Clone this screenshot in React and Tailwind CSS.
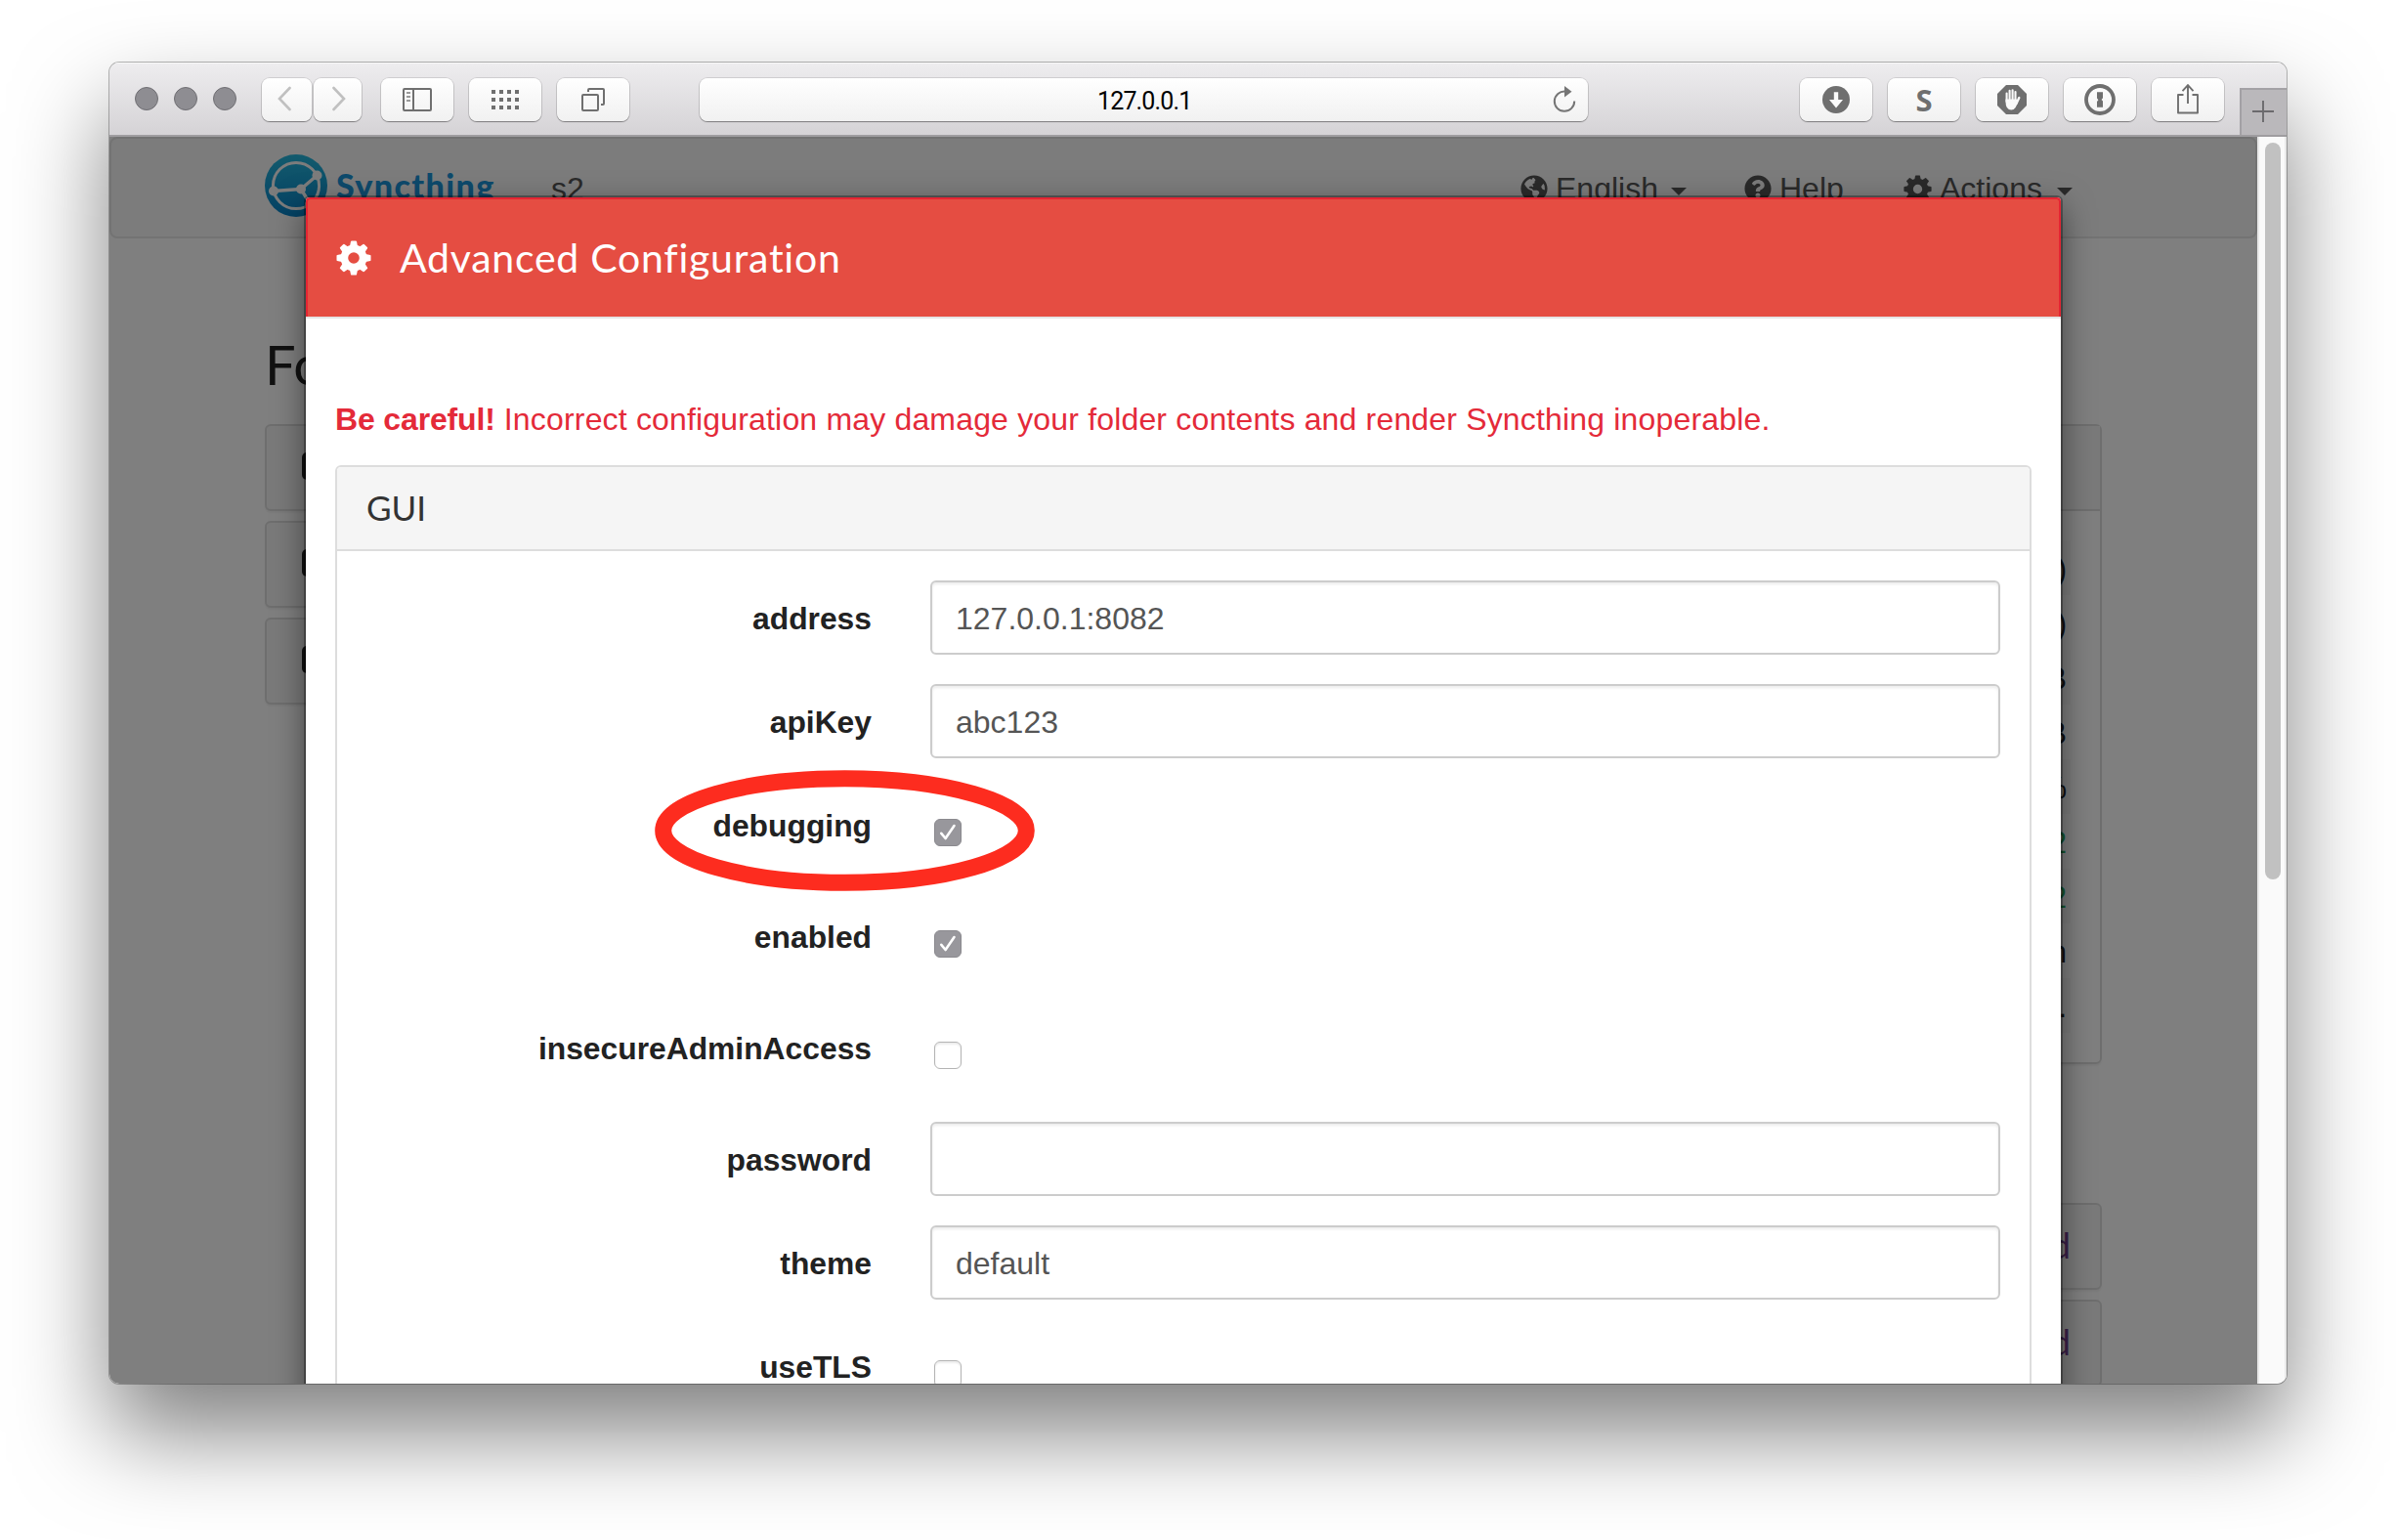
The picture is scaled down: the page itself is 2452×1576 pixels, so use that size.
import React from "react";
import { FaQuestionCircle, FaGlobeAmericas } from "react-icons/fa";

const TOOTH = "M-4.2,-11 L-3,-17 Q-2.8,-17.5 -2,-17.5 L2,-17.5 Q2.8,-17.5 3,-17 L4.2,-11 Z";

function Cog({ className }) {
  return (
    <svg viewBox="-18 -18 36 36" className={className} fill="currentColor">
      <circle r="9.6" fill="none" stroke="currentColor" strokeWidth="7.6" />
      {[0, 45, 90, 135, 180, 225, 270, 315].map((a) => (
        <path key={a} d={TOOTH} transform={`rotate(${a})`} />
      ))}
    </svg>
  );
}

function Caret({ className }) {
  return (
    <svg viewBox="0 0 16 8" className={className} fill="currentColor">
      <path d="M0 0H16L8 8Z" />
    </svg>
  );
}

function ToolButton({ className, children }) {
  return (
    <div
      className={
        "flex h-[44px] shrink-0 items-center justify-center rounded-[8px] bg-linear-to-b from-white to-[#f1f1f1] shadow-[0_0_0_1px_rgba(0,0,0,0.11),0_1px_1px_rgba(0,0,0,0.35)] " +
        className
      }
    >
      {children}
    </div>
  );
}

function Toolbar() {
  return (
    <div className="flex h-[76px] shrink-0 items-start border-b-2 border-[#9f9da0] bg-linear-to-b from-[#eeedef] to-[#d5d3d6] pt-[16px] text-[#6f6f6f] shadow-[inset_0_1px_0_#f8f8f8]">
      <div className="ml-[26px] mt-[9px] flex gap-[16px]">
        {[0, 1, 2].map((i) => (
          <div key={i} className="size-[24px] rounded-full border border-[#6f6e73] bg-[#8e8d92]" />
        ))}
      </div>
      <ToolButton className="ml-[26px] w-[51px] text-[#c0c0c0]">
        <svg className="-ml-[6px] -mt-[2px] h-[26px] w-[14px]" viewBox="0 0 14 26" fill="none" stroke="currentColor" strokeWidth="2.6" strokeLinecap="round">
          <path d="M12.5 2L2 13L12.5 24" />
        </svg>
      </ToolButton>
      <ToolButton className="ml-[2px] w-[49px] text-[#c0c0c0]">
        <svg className="ml-[3px] -mt-[2px] h-[26px] w-[14px]" viewBox="0 0 14 26" fill="none" stroke="currentColor" strokeWidth="2.6" strokeLinecap="round">
          <path d="M1.5 2L12 13L1.5 24" />
        </svg>
      </ToolButton>
      <ToolButton className="ml-[20px] w-[74px]">
        <svg className="h-[24px] w-[30px]" viewBox="0 0 30 24" fill="none" stroke="currentColor" strokeWidth="2">
          <rect x="1" y="1" width="28" height="22" rx="1" />
          <path d="M11 1V23" />
          <path d="M4 5H8M4 9H8M4 13H8" strokeWidth="1.8" stroke="#9a9a9a" />
        </svg>
      </ToolButton>
      <ToolButton className="ml-[16px] w-[74px]">
        <svg className="h-[20px] w-[28px]" viewBox="0 0 28 20" fill="currentColor">
          {[0, 8, 16, 24].map((x) =>
            [0, 8, 16].map((y) => <rect key={x + "-" + y} x={x} y={y} width="4" height="4" />)
          )}
        </svg>
      </ToolButton>
      <ToolButton className="ml-[16px] w-[74px]">
        <svg className="h-[24px] w-[24px]" viewBox="0 0 24 24" fill="none" stroke="currentColor" strokeWidth="2">
          <rect x="1" y="7" width="16" height="16" rx="1" />
          <path d="M7 4V2Q7 1 8 1H22Q23 1 23 2V16Q23 17 22 17H20" />
        </svg>
      </ToolButton>
      <ToolButton className="ml-[72px] w-[909px]">
        <span className="ml-[407px] mt-[4px] text-[25px] leading-[44px] tracking-[-0.85px] text-black font-['Roboto',sans-serif]">
          127.0.0.1
        </span>
        <svg className="ml-auto mr-[11px] h-[28px] w-[26px]" viewBox="0 0 26 28" fill="none" stroke="#757575" strokeWidth="2">
          <path d="M14 5.5A10.2 10.2 0 1 0 23.2 15.5" />
          <path d="M13 0L20.5 5.8L13 11.5Z" fill="#757575" stroke="none" />
        </svg>
      </ToolButton>
      <ToolButton className="ml-[217px] w-[74px]">
        <svg className="h-[28px] w-[28px]" viewBox="0 0 28 28">
          <circle cx="14" cy="14" r="14" fill="currentColor" />
          <path d="M11.8 6.2H16.2V14H21L14 22.5L7 14H11.8Z" fill="#fafafa" />
        </svg>
      </ToolButton>
      <ToolButton className="ml-[16px] w-[74px]">
        <span className="text-[31px] font-bold leading-[44px] font-['Open_Sans',sans-serif]">S</span>
      </ToolButton>
      <ToolButton className="ml-[16px] w-[74px]">
        <svg className="h-[30px] w-[30px]" viewBox="0 0 30 30">
          <path d="M9 0H21L30 9V21L21 30H9L0 21V9Z" fill="currentColor" />
          <g stroke="#fafafa" strokeWidth="2.1" strokeLinecap="round">
            <path d="M9.6 8.5V17M12.6 5.8V16M15.6 5.2V16M18.5 7V17" />
            <path d="M19.5 19L22.3 13" strokeWidth="2.4" />
          </g>
          <path d="M8.5 14.5H19.6L21 16.5Q19.5 25.2 14.3 25.6Q8.6 25.4 8.5 17Z" fill="#fafafa" />
        </svg>
      </ToolButton>
      <ToolButton className="ml-[16px] w-[74px]">
        <svg className="h-[32px] w-[32px]" viewBox="0 0 32 32">
          <circle cx="16" cy="16" r="14" fill="none" stroke="currentColor" strokeWidth="3.8" />
          <path d="M13 8.3H19V14.2L17.6 16L19 17.4V23.8H13V18L14.4 16.2L13 14.6Z" fill="currentColor" />
        </svg>
      </ToolButton>
      <ToolButton className="ml-[16px] w-[74px]">
        <svg className="-mt-[2px] h-[32px] w-[24px]" viewBox="0 0 24 32" fill="none" stroke="currentColor" strokeWidth="1.9">
          <path d="M7.5 12H2V30.5H22V12H16.5" strokeLinejoin="round" />
          <path d="M12 21V2.5M6.5 8.2L12 2.2L17.5 8.2" />
        </svg>
      </ToolButton>
      <div className="ml-[16px] mt-[10px] flex h-[48px] flex-1 items-center justify-center border-l-2 border-t-2 border-[#a3a1a5] bg-[#bab8bb]">
        <svg className="-ml-[2px] -mt-[2px] h-[22px] w-[22px]" viewBox="0 0 22 22" stroke="#6b6a6d" strokeWidth="1.9">
          <path d="M11 0V22M0 11H22" />
        </svg>
      </div>
    </div>
  );
}

function Logo() {
  return (
    <svg className="h-[64px] w-[64px]" viewBox="0 0 64 64">
      <defs>
        <linearGradient id="logo" x1="0" y1="0" x2="0" y2="1">
          <stop offset="0" stopColor="#26b6db" />
          <stop offset="1" stopColor="#0882c8" />
        </linearGradient>
      </defs>
      <circle cx="32" cy="32" r="32" fill="url(#logo)" />
      <g fill="none" stroke="#f8f8f8" strokeWidth="3">
        <circle cx="32" cy="32" r="23.6" />
        <path d="M37 35.5L54 21M37 35.5L9 37.5M37 35.5L46 50" strokeWidth="3.4" />
      </g>
      <g fill="#f8f8f8">
        <circle cx="53.5" cy="21.5" r="5" />
        <circle cx="9" cy="37.5" r="5" />
        <circle cx="46" cy="51" r="5" />
        <circle cx="37" cy="35.5" r="5" />
      </g>
    </svg>
  );
}

function Navbar() {
  return (
    <div className="flex h-[104px] items-start rounded-[8px] border-2 border-[#e7e7e7] bg-[#f8f8f8] pl-[157px] text-[32px] leading-[42px] text-[#555]">
      <div className="mt-[16px]">
        <Logo />
      </div>
      <span className="ml-[9px] mt-[27px] w-[162px] whitespace-nowrap text-[34px] font-black tracking-[1.4px] text-[#1a94d8] font-['Lato',sans-serif]">
        Syncthing
      </span>
      <span className="ml-[58px] mt-[30px] w-[40px]">s2</span>
      <FaGlobeAmericas className="ml-[952px] mt-[37px] size-[28px]" />
      <span className="ml-[8px] mt-[30px] w-[104px]">English</span>
      <Caret className="ml-[14px] mt-[50px] h-[8px] w-[16px]" />
      <FaQuestionCircle className="ml-[59px] mt-[37px] size-[28px]" />
      <span className="ml-[8px] mt-[30px] w-[66px]">Help</span>
      <Cog className="ml-[61px] mt-[37px] size-[29px]" />
      <span className="ml-[8px] mt-[30px] w-[108px]">Actions</span>
      <Caret className="ml-[12px] mt-[50px] h-[8px] w-[16px]" />
    </div>
  );
}

const statusRows = [
  [")", ""],
  [")", ""],
  ["B", ""],
  ["B", ""],
  ["%", ""],
  ["2", "text-[#27ae60]"],
  ["2", "text-[#27ae60]"],
  ["n", ""],
  [".", ""],
];

const card = "rounded-[6px] border-2 border-[#ddd] shadow-[0_2px_2px_rgba(0,0,0,0.05)]";

function Page() {
  return (
    <div className="h-full bg-white text-black">
      <Navbar />
      <div className="mx-auto mt-[94px] flex w-[1880px] justify-between">
        <div className="flex w-[910px] flex-col">
          <h3 className="mb-[28px] pt-[2px] text-[56px] leading-[66px] text-[#222] font-['Lato',sans-serif]">Folders</h3>
          <div className="flex flex-col gap-[10px]">
            {[0, 1, 2].map((i) => (
              <div key={i} className={"flex h-[89px] items-center bg-[#f5f5f5] pb-[3px] pl-[36px] " + card}>
                <div className="h-[28px] w-[32px] rounded-[5px] bg-[#222]" />
              </div>
            ))}
          </div>
        </div>
        <div className="mt-[96px] flex w-[910px] flex-col">
          <div className={"h-[655px] " + card}>
            <div className="h-[87px] border-b-2 border-[#ddd] bg-[#f5f5f5]" />
            <div className="mx-[30px] mt-[30px] text-[31px] text-[#222]">
              {statusRows.map(([text, color], i) => (
                <div key={i} className="h-[56px] pr-[4px] text-right leading-[59px] odd:bg-[#f9f9f9]">
                  <span className={color}>{text}</span>
                </div>
              ))}
            </div>
          </div>
          <div className="mt-[142px] flex flex-col gap-[10px]">
            {[0, 1].map((i) => (
              <div key={i} className={"h-[89px] bg-[#f5f5f5] pr-[30px] text-right text-[36px] leading-[83px] text-[#764093] font-['Lato',sans-serif] " + card}>
                d
              </div>
            ))}
          </div>
        </div>
      </div>
    </div>
  );
}

function Checkbox({ checked }) {
  if (!checked) {
    return (
      <div className="ml-[4px] mt-[32px] size-[28px] rounded-[6px] border border-[#b4b4b4] bg-white shadow-[inset_0_2px_2px_rgba(0,0,0,0.08)]" />
    );
  }
  return (
    <div className="ml-[4px] mt-[32px] flex size-[28px] items-center justify-center rounded-[6px] border border-[#8b8a8f] bg-[#98979c]">
      <svg className="h-[18px] w-[18px]" viewBox="0 0 18 18" fill="none" stroke="white" strokeWidth="2.6" strokeLinecap="round" strokeLinejoin="round">
        <path d="M2.3 9.8L6.6 15L15.5 2" />
      </svg>
    </div>
  );
}

const fields = [
  { name: "address", value: "127.0.0.1:8082" },
  { name: "apiKey", value: "abc123" },
  { name: "debugging", checked: true },
  { name: "enabled", checked: true },
  { name: "insecureAdminAccess", checked: false },
  { name: "password", value: "" },
  { name: "theme", value: "default" },
  { name: "useTLS", checked: false },
];

function Field({ name, value, checked }) {
  const isText = value !== undefined;
  return (
    <div className={isText ? "flex h-[106px]" : "flex h-[114px]"}>
      <div className="relative w-[547px] shrink-0 pt-[18px] text-right text-[31.8px] font-bold leading-[42px] text-[#222]">
        {name}
        {name === "debugging" && (
          <svg className="absolute left-[325px] -top-[18px] z-10 h-[124px] w-[390px]" viewBox="0 0 390 124">
            <ellipse cx="194.5" cy="62" rx="185.8" ry="53.3" fill="none" stroke="#fd2c1f" strokeWidth="17" />
          </svg>
        )}
      </div>
      {isText ? (
        <div className="ml-[60px] h-[76px] w-[1095px] rounded-[6px] border-2 border-[#ccc] bg-white pl-[24px] pt-[1px] text-[32px] leading-[72px] text-[#555] shadow-[inset_0_2px_3px_rgba(0,0,0,0.08)]">
          {value}
        </div>
      ) : (
        <div className="ml-[60px]">
          <Checkbox checked={checked} />
        </div>
      )}
    </div>
  );
}

function Modal() {
  return (
    <div className="h-[1400px] w-[1796px] rounded-[4px] bg-white shadow-[0_0_0_2px_rgba(0,0,0,0.3),0_11px_33px_rgba(0,0,0,0.5)]">
      <div className="flex h-[124px] flex-col rounded-t-[4px] border-b-2 border-[#e5e5e5]">
        <div className="flex flex-1 items-center rounded-t-[4px] border-x-2 border-t-2 border-[#e42533] bg-[#e54d42] pl-[29px] text-white">
          <Cog className="size-[36px]" />
          <h4 className="ml-[29px] text-[41px] leading-[48px] tracking-[0.75px] font-['Lato',sans-serif]">
            Advanced Configuration
          </h4>
        </div>
      </div>
      <div className="px-[30px] pt-[81px]">
        <p className="mb-[25px] whitespace-nowrap text-[32px] leading-[44px] tracking-[0.17px] text-[#e42a39]">
          <b className="tracking-[-0.15px]">Be careful!</b> Incorrect configuration may damage your folder contents and render Syncthing inoperable.
        </p>
        <div className="h-[1200px] rounded-[6px] border-2 border-[#ddd]">
          <div className="flex h-[86px] items-center rounded-t-[4px] border-b-2 border-[#ddd] bg-[#f5f5f5] pb-[2px] pl-[30px] text-[35px] leading-[40px] text-[#333] font-['Lato',sans-serif]">
            GUI
          </div>
          <div className="pt-[30px]">
            {fields.map((f) => (
              <Field key={f.name} {...f} />
            ))}
          </div>
        </div>
      </div>
    </div>
  );
}

export default function App() {
  return (
    <div className="flex h-[1576px] w-[2452px] items-start overflow-hidden bg-white pl-[112px] pt-[64px] font-['Liberation_Sans',Arial,sans-serif]">
      <div className="flex h-[1352px] w-[2228px] flex-col rounded-[10px] shadow-[0_0_0_1px_rgba(0,0,0,0.28),0_50px_96px_rgba(0,0,0,0.5)]">
        <div className="flex h-full flex-col overflow-hidden rounded-[10px]">
          <Toolbar />
          <div className="flex h-[1276px]">
            <div className="relative h-full w-[2198px] overflow-hidden">
              <Page />
              <div className="absolute inset-0 flex justify-center bg-black/50 pt-[62px]">
                <Modal />
              </div>
            </div>
            <div className="h-full w-[30px] border-x-2 border-[#e9e9e9] bg-[#fafafa] pl-[6px] pt-[6px]">
              <div className="h-[754px] w-[16px] rounded-full bg-[#c1c1c1]" />
            </div>
          </div>
        </div>
      </div>
    </div>
  );
}
